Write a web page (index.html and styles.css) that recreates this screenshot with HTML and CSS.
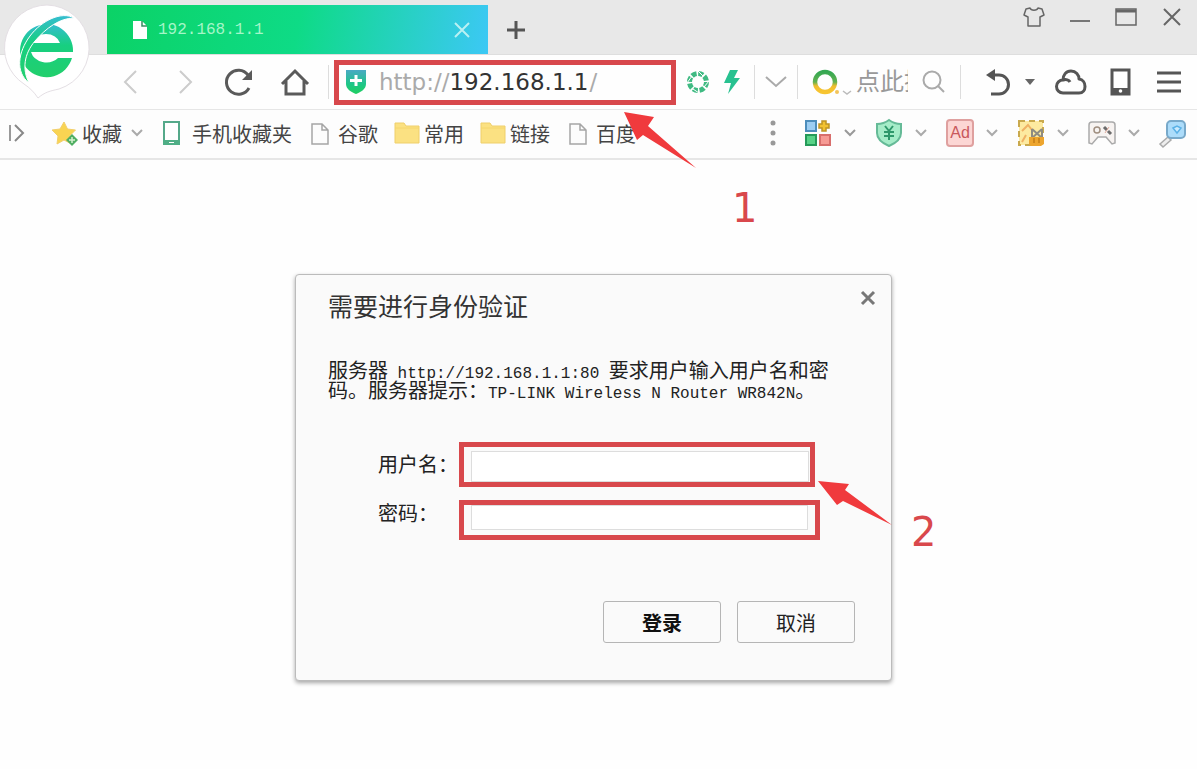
FILE: index.html
```html
<!DOCTYPE html>
<html lang="zh-CN">
<head>
  <meta charset="UTF-8" />
  <meta name="viewport" content="width=device-width, initial-scale=1.0"/>
  <title>192.168.1.1</title>
  <link rel="stylesheet" href="styles.css">
</head>
<body>
  <header class="browser">
    <div class="logo">
      <svg width="92" height="100" viewBox="0 0 92 100">
        <defs>
          <linearGradient id="eFill" x1="0" y1="0" x2="0" y2="1">
            <stop offset="0" stop-color="#35bdd0"/>
            <stop offset="0.4" stop-color="#17cf80"/>
            <stop offset="1" stop-color="#22cf6c"/>
          </linearGradient>
        </defs>
        <path d="M47 5A43 43 0 0 1 59 89c-9 2-14 3-21 9-4-6-8-10-14-14A43 43 0 0 1 47 5z" fill="#fff" stroke="#e4dfe4"/>
        <path d="M73 52H31a16 14 0 0 0 27 6h14A26.500 26.500 0 1 1 73 52zM32 43h28a14.500 12 0 0 0-28 0z" fill="url(#eFill)" fill-rule="evenodd"/>
        <path d="M74 18C62 11 42 20 30 36 18 52 15 72 29 83c-7-14-5-29 6-42s25-23 39-23z" fill="url(#eFill)" stroke="#fff"/>
      </svg>
    </div>

    <div class="tab-strip">
      <div class="tab">
        <svg width="16" height="20" viewBox="0 0 16 20"><path d="M1 1h9l5 5v13H1z" fill="#fff"/><path d="M10 1v5h5" fill="none" stroke="#3a8d62" stroke-width="1.500"/></svg>
        <span class="tab-title">192.168.1.1</span>
        <button class="tab-close" aria-label="关闭标签页">
          <svg width="16" height="16" viewBox="0 0 16 16"><path d="M1 1l14 14M15 1L1 15" stroke="#b9f1f3" stroke-width="2"/></svg>
        </button>
      </div>
      <button class="new-tab" aria-label="新标签页">
        <svg width="18" height="18" viewBox="0 0 18 18"><path d="M9 0v18M0 9h18" stroke="#555" stroke-width="3"/></svg>
      </button>
      <div class="window-buttons">
        <button aria-label="皮肤"><svg width="22" height="20" viewBox="0 0 22 20"><path d="M7 1c1 3 7 3 8 0l4 1 2 6-4 2v9H5v-9L1 8l2-6z" fill="none" stroke="#666" stroke-width="1.500" stroke-linejoin="round"/></svg></button>
        <button aria-label="最小化"><svg width="20" height="20" viewBox="0 0 20 20"><path d="M0 14h20" stroke="#777" stroke-width="2"/></svg></button>
        <button aria-label="最大化"><svg width="22" height="18" viewBox="0 0 22 18"><path d="M1 1h20v16H1z" fill="none" stroke="#666" stroke-width="1.500"/><path d="M1 3h20" stroke="#666" stroke-width="3"/></svg></button>
        <button aria-label="关闭"><svg width="18" height="18" viewBox="0 0 18 18"><path d="M1 1l16 16M17 1L1 17" stroke="#666" stroke-width="2"/></svg></button>
      </div>
    </div>

    <div class="toolbar">
      <nav class="nav-buttons">
        <button aria-label="后退"><svg width="28" height="28" viewBox="0 0 28 28"><path d="M20 3L9 14l11 11" fill="none" stroke="#ccc" stroke-width="2"/></svg></button>
        <button aria-label="前进"><svg width="28" height="28" viewBox="0 0 28 28"><path d="M9 3l11 11L9 25" fill="none" stroke="#ccc" stroke-width="2"/></svg></button>
        <button aria-label="刷新"><svg width="28" height="28" viewBox="0 0 28 28"><path d="M22 7A12 12 0 1 0 23 20" fill="none" stroke="#5a5a5a" stroke-width="3"/><path d="M26 2v10h-10z" fill="#5a5a5a"/></svg></button>
        <button aria-label="主页"><svg width="28" height="28" viewBox="0 0 28 28"><path d="M1 16L14 3l13 13M5 13v13h18V13" fill="none" stroke="#5a5a5a" stroke-width="3"/></svg></button>
      </nav>
      <span class="divider"></span>
      <div class="address mark">
        <svg width="22" height="26" viewBox="0 0 22 26">
          <defs><linearGradient id="shieldFill" x1="0" y1="0" x2="0" y2="1"><stop offset="0" stop-color="#4aa9c4"/><stop offset="0.600" stop-color="#1dc686"/><stop offset="1" stop-color="#20cf60"/></linearGradient></defs>
          <path d="M1 1h20v14c0 5-5 8-10 10C6 23 1 20 1 15z" fill="url(#shieldFill)"/><path d="M11 6v11M5 11.500h12" stroke="#fff" stroke-width="3"/>
        </svg>
        <label class="scheme" for="url">http://</label><input class="url" id="url" type="text" value="192.168.1.1"><span class="scheme">/</span>
        <svg class="arrow arrow-one" width="74" height="58" viewBox="0 0 74 58"><path d="M1 1l30 5-6 9 48 42-53-33-6 5z" fill="#f03a3d"/></svg>
        <span class="step step-one">1</span>
      </div>
      <div class="page-tools">
        <button aria-label="极速模式"><svg width="24" height="24" viewBox="0 0 24 24"><circle cx="12" cy="12" r="8.500" fill="none" stroke="#3fba82" stroke-width="5" stroke-dasharray="5 1.670"/><path d="M12 1l5 5M23 11l-5 6M13 23l-6-4M1 13l5-7" stroke="#fff"/></svg></button>
        <button aria-label="加速"><svg width="24" height="26" viewBox="0 0 24 26"><path d="M10 1h8l-4 8h6L8 25l3-11H4z" fill="#28c190"/></svg></button>
        <span class="divider"></span>
        <button aria-label="展开"><svg width="22" height="12" viewBox="0 0 22 12"><path d="M1 1l10 9L21 1" fill="none" stroke="#aaa" stroke-width="2"/></svg></button>
        <span class="divider"></span>
      </div>
      <div class="search">
        <svg width="28" height="28" viewBox="0 0 28 28">
          <defs><linearGradient id="ringFill" x1="0" y1="0" x2="0" y2="1"><stop offset="0" stop-color="#35a852"/><stop offset="0.500" stop-color="#63b150"/><stop offset="0.700" stop-color="#f0bd2e"/><stop offset="1" stop-color="#f7c531"/></linearGradient></defs>
          <circle cx="13" cy="14" r="10" fill="none" stroke="url(#ringFill)" stroke-width="4.500"/><circle cx="25" cy="24" r="2" fill="#f2c45c"/>
        </svg>
        <svg class="search-more" width="10" height="6" viewBox="0 0 10 6"><path d="M1 1l4 3 4-3" fill="none" stroke="#bbb" stroke-width="1.500"/></svg>
        <input class="search-input" type="text" aria-label="搜索" placeholder="点此搜索">
        <button aria-label="搜索"><svg width="24" height="24" viewBox="0 0 24 24"><circle cx="10" cy="10" r="8.500" fill="none" stroke="#aaa" stroke-width="2"/><path d="M16 16l6 6" stroke="#aaa" stroke-width="2"/></svg></button>
      </div>
      <span class="divider"></span>
      <div class="menu-buttons">
        <button class="undo" aria-label="恢复">
          <svg width="26" height="28" viewBox="0 0 26 28"><path d="M7 7h7a9.500 9.500 0 0 1 0 19H6" fill="none" stroke="#555" stroke-width="3"/><path d="M1 7l9-6v12z" fill="#555"/></svg>
          <svg width="10" height="6" viewBox="0 0 10 6"><path d="M0 0h10L5 6z" fill="#666"/></svg>
        </button>
        <button aria-label="云"><svg width="32" height="26" viewBox="0 0 32 26"><path d="M8 24a6.500 6.500 0 0 1 0-13c0-5 3-9 8-9s8 4 8 8c8 1 8 14 0 14zM8 11c3-1 6 0 7 2" fill="none" stroke="#555" stroke-width="3" stroke-linejoin="round"/></svg></button>
        <button aria-label="手机"><svg width="28" height="28" viewBox="0 0 28 28"><path d="M5 2h17v24H5z" fill="none" stroke="#555" stroke-width="3"/><path d="M5 20h17v6H5z" fill="#555"/><circle cx="13.500" cy="23" r="1.800" fill="#fff"/></svg></button>
        <button aria-label="菜单"><svg width="28" height="24" viewBox="0 0 28 24"><path d="M2 3h24M2 12h24M2 21h24" stroke="#555" stroke-width="3"/></svg></button>
      </div>
    </div>

    <div class="bookmarks">
      <button class="sidebar-toggle" aria-label="侧边栏"><svg width="18" height="18" viewBox="0 0 18 18"><path d="M2 1v16" stroke="#999" stroke-width="2"/><path d="M7 1l8 8-8 8" fill="none" stroke="#888" stroke-width="2"/></svg></button>
      <a class="bookmark" href="#">
        <svg width="24" height="24" viewBox="0 0 24 24"><path d="M12 1l3.500 7 8 1-6 6 2 8-7.500-4-7 4 1-8-6-6 8-1z" fill="#f9d452" stroke="#f2cf6b"/><path d="M20 13l6 6-6 6-6-6z" fill="#4fae62"/><path d="M20 16v6M17 19h6" stroke="#d5f0d0" stroke-width="1.500"/></svg>
        <span>收藏</span>
        <svg class="bookmark-more" width="12" height="8" viewBox="0 0 12 8"><path d="M1 1l5 5 5-5" fill="none" stroke="#aaa" stroke-width="2"/></svg>
      </a>
      <a class="bookmark" href="#">
        <svg width="24" height="24" viewBox="0 0 24 24"><path d="M2 1h15v22H2z" fill="#fff" stroke="#55a98a" stroke-width="2"/><path d="M1 19h17v5H1z" fill="#4fae86"/><path d="M7 21.500h5" stroke="#fff"/></svg>
        <span>手机收藏夹</span>
      </a>
      <a class="bookmark" href="#">
        <svg width="24" height="24" viewBox="0 0 24 24"><path d="M4 3h10l6 6v14H4zM14 3v6h6" fill="#fcfcfc" stroke="#a5a5a5" stroke-width="1.500"/></svg>
        <span>谷歌</span>
      </a>
      <a class="bookmark" href="#">
        <svg width="24" height="24" viewBox="0 0 24 24"><path d="M1 2h9l2 3h13v17H1z" fill="#fbe182" stroke="#efcf6a"/><path d="M1 7h24" stroke="#f5d66c"/></svg>
        <span>常用</span>
      </a>
      <a class="bookmark" href="#">
        <svg width="24" height="24" viewBox="0 0 24 24"><path d="M1 2h9l2 3h13v17H1z" fill="#fbe182" stroke="#efcf6a"/><path d="M1 7h24" stroke="#f5d66c"/></svg>
        <span>链接</span>
      </a>
      <a class="bookmark" href="#">
        <svg width="24" height="24" viewBox="0 0 24 24"><path d="M4 3h10l6 6v14H4zM14 3v6h6" fill="#fcfcfc" stroke="#a5a5a5" stroke-width="1.500"/></svg>
        <span>百度</span>
      </a>

      <div class="extensions">
        <svg width="6" height="26" viewBox="0 0 6 26"><circle cx="3" cy="3" r="2.500" fill="#999"/><circle cx="3" cy="13" r="2.500" fill="#999"/><circle cx="3" cy="23" r="2.500" fill="#999"/></svg>
        <button class="extension" aria-label="应用">
          <svg width="28" height="28" viewBox="0 0 28 28"><path d="M2 2h10v10H2z" fill="#9ccdf2" stroke="#4d8dbb" stroke-width="2"/><path d="M18 2h4v3h3v4h-3v3h-4V9h-3V5h3z" fill="#f2c230" stroke="#bd9425" stroke-width="1.500"/><path d="M2 16h10v10H2z" fill="#58d287" stroke="#259a59" stroke-width="2"/><path d="M16 16h10v10H16z" fill="#f69a94" stroke="#d86e6c" stroke-width="2"/></svg>
          <svg width="12" height="8" viewBox="0 0 12 8"><path d="M1 1l5 5 5-5" fill="none" stroke="#999" stroke-width="2"/></svg>
        </button>
        <button class="extension" aria-label="网购保镖">
          <svg width="28" height="28" viewBox="0 0 28 28"><path d="M14 1c4 3 8 4 12 4v9c0 6-5 10-12 13C7 24 2 20 2 14V5c4 0 8-1 12-4z" fill="#a5ecc8" stroke="#65ba97" stroke-width="2"/><path d="M10 7l4 5 4-5M14 12v9M9 13h10M9 17h10" fill="none" stroke="#2e986b" stroke-width="2"/></svg>
          <svg width="12" height="8" viewBox="0 0 12 8"><path d="M1 1l5 5 5-5" fill="none" stroke="#aaa" stroke-width="2"/></svg>
        </button>
        <button class="extension" aria-label="广告拦截">
          <span class="ad">Ad</span>
          <svg width="12" height="8" viewBox="0 0 12 8"><path d="M1 1l5 5 5-5" fill="none" stroke="#aaa" stroke-width="2"/></svg>
        </button>
        <button class="extension" aria-label="截图">
          <svg width="28" height="28" viewBox="0 0 28 28"><path d="M2 2h24v24H2z" fill="#fdeaa0" stroke="#c9a94e" stroke-width="2" stroke-dasharray="6 4"/><path d="M5 12l6-6 4 5M5 23l4-7" fill="none" stroke="#f0b264" stroke-width="2"/><path d="M15 10v8M25 10v8M15 10l10 9M25 10l-10 9" stroke="#8f8c81" stroke-width="2"/><path d="M12 18h15v7l-3 2H14l-2-2z" fill="#eda52e"/><path d="M17 19v5M22 19v5" stroke="#c57d16" stroke-width="1.500"/></svg>
          <svg width="12" height="8" viewBox="0 0 12 8"><path d="M1 1l5 5 5-5" fill="none" stroke="#aaa" stroke-width="2"/></svg>
        </button>
        <button class="extension" aria-label="游戏">
          <svg width="28" height="28" viewBox="0 0 28 28"><path d="M4 3h20c2 0 3 1 3 3v18l-3 1-6-7h-8l-6 7-3-1V6c0-2 1-3 3-3z" fill="#f7f3f1" stroke="#aaa" stroke-width="1.500"/><circle cx="9" cy="11" r="3" fill="none" stroke="#a08f80" stroke-width="1.500"/><path d="M16 8l3 3M20 12l3 3" stroke="#6c6c6c" stroke-width="3"/><path d="M21 8l-4 6" stroke="#e0a99a"/></svg>
          <svg width="12" height="8" viewBox="0 0 12 8"><path d="M1 1l5 5 5-5" fill="none" stroke="#aaa" stroke-width="2"/></svg>
        </button>
        <button class="extension" aria-label="查找">
          <svg width="28" height="28" viewBox="0 0 28 28"><path d="M9 18l3 3-8 7-3-3z" fill="#eee" stroke="#aaa" stroke-width="1.500"/><rect x="8" y="2" width="18" height="17" rx="4" fill="#acdcfa" stroke="#78a9ca" stroke-width="2"/><path d="M14 9l4-2 4 2-4 5z" fill="#cbeafd" stroke="#5bb1e6" stroke-width="1.500"/></svg>
        </button>
      </div>
    </div>
  </header>

  <main class="page">
    <section class="dialog" role="dialog" aria-labelledby="dialogTitle">
      <div class="dialog-head">
        <h1 id="dialogTitle">需要进行身份验证</h1>
        <button class="dialog-close" aria-label="关闭"><svg width="14" height="14" viewBox="0 0 14 14"><path d="M1 1l12 12M13 1L1 13" stroke="#777" stroke-width="3"/></svg></button>
      </div>
      <p class="message">服务器<span class="latin"> http://192.168.1.1:80 </span>要求用户输入用户名和密码。服务器提示：<span class="latin">TP-LINK Wireless N Router WR842N</span>。</p>
      <form>
        <div class="field field-user">
          <label for="username">用户名：</label>
          <div class="mark">
            <input type="text" id="username">
            <svg class="arrow arrow-two" width="76" height="46" viewBox="0 0 76 46"><path d="M1 1l31 3-4 6 47 35-49-24-6 4z" fill="#f03a3d"/></svg>
            <span class="step step-two">2</span>
          </div>
        </div>
        <div class="field field-password">
          <label for="password">密码：</label>
          <div class="mark"><input type="password" id="password"></div>
        </div>
        <div class="actions">
          <button class="login" type="button">登录</button>
          <button type="button">取消</button>
        </div>
      </form>
    </section>
  </main>
</body>
</html>
```
FILE: styles.css
```css
* {
  box-sizing: border-box;
}
body {
  margin: 0;
  background: #fefefe;
  color: #333;
  font-family: "Liberation Sans", "Noto Sans CJK SC", sans-serif;
  font-size: 20px;
}
button {
  display: flex;
  align-items: center;
  justify-content: center;
  padding: 0;
  border: none;
  background: none;
  font: inherit;
  color: inherit;
  cursor: pointer;
}
input {
  font: inherit;
  outline: none;
}
svg {
  flex: none;
  overflow: visible;
}

/* browser chrome */
.browser {
  position: relative;
}
.logo {
  position: absolute;
  left: 0;
  top: 0;
  z-index: 1;
}
.tab-strip {
  display: flex;
  height: 55px;
  padding: 5px 11px 0 107px;
  background: #e8e8e8;
  border-bottom: 1px solid #dedede;
}
.tab {
  display: flex;
  align-items: center;
  flex: 0 1 381px;
  padding: 0 18px 0 25px;
  background: linear-gradient(100deg, #0bd266 0%, #0edb86 50%, #3cc8f5 100%);
}
.tab-title {
  flex: 1;
  margin-left: 10px;
  font-family: "Liberation Mono", monospace;
  font-size: 16px;
  color: #a5f5c8;
}
.new-tab {
  width: 56px;
}
.window-buttons {
  display: flex;
  gap: 18px;
  height: 24px;
  margin-left: auto;
}
.window-buttons button {
  width: 28px;
}

.toolbar {
  display: flex;
  align-items: center;
  height: 55px;
  padding: 0 14px 0 114px;
  background: #fefefe;
  border-bottom: 1px solid #e6e6e6;
}
.nav-buttons {
  display: flex;
  gap: 23px;
}
.nav-buttons button {
  width: 32px;
}
.divider {
  width: 1px;
  height: 34px;
  background: #ddd;
}
.nav-buttons + .divider {
  margin: 0 5px 0 17px;
}
.mark {
  position: relative;
  display: flex;
  border: 5px solid #d8484c;
}
.address {
  flex: 1;
  align-items: center;
  min-width: 0;
  height: 45px;
  padding-left: 6px;
  font-family: "DejaVu Sans", sans-serif;
  font-size: 23px;
}
.address > svg:first-child {
  margin-right: 12px;
}
.scheme {
  color: #aaa;
}
.url {
  width: 140px;
  padding: 0;
  border: none;
  background: none;
  color: #333;
}
.arrow {
  position: absolute;
  z-index: 2;
}
.arrow-one {
  left: 284px;
  top: 46px;
}
.step {
  position: absolute;
  font-family: "DejaVu Sans", sans-serif;
  font-size: 40px;
  line-height: 40px;
  color: #d9484c;
}
.step-one {
  left: 393px;
  top: 123px;
}
.page-tools {
  display: flex;
  align-items: center;
  gap: 10px;
  margin-left: 10px;
}
.search {
  display: flex;
  align-items: center;
  margin: 0 14px;
}
.search-more {
  margin: 22px 4px 0 2px;
}
.search-input {
  width: 52px;
  padding: 0;
  border: none;
  background: none;
  font-size: 24px;
}
.search-input::placeholder {
  color: #999;
}
.search button {
  margin-left: 14px;
}
.menu-buttons {
  display: flex;
  align-items: center;
  gap: 20px;
  margin-left: 24px;
}
.undo {
  gap: 14px;
}

.bookmarks {
  display: flex;
  align-items: center;
  gap: 16px;
  height: 50px;
  padding: 0 10px 2px 8px;
  background: #fdfdfd;
  border-bottom: 2px solid #e6e6e6;
}
.sidebar-toggle {
  margin-right: 10px;
}
.bookmark {
  display: flex;
  align-items: center;
  gap: 6px;
  white-space: nowrap;
  color: #444;
  text-decoration: none;
}
.bookmark-more {
  margin: 0 3px;
}
.extensions {
  display: flex;
  align-items: center;
  gap: 19px;
  margin-left: auto;
}
.extensions > svg {
  margin-right: 9px;
}
.extension {
  gap: 12px;
}
.ad {
  width: 28px;
  border: 2px solid #dfa09f;
  border-radius: 4px;
  background: #fcd6d4;
  font-size: 16px;
  line-height: 24px;
  color: #c9585c;
}

/* login dialog */
.page {
  padding: 114px 10px 20px 0;
}
.dialog {
  max-width: 597px;
  margin: 0 auto;
  padding: 16px 36px 37px 32px;
  border: 1px solid #bbb;
  border-radius: 4px;
  background: #fafafa;
  box-shadow: 0 2px 4px rgba(0, 0, 0, 0.35);
}
.dialog-head {
  display: flex;
  justify-content: space-between;
  align-items: flex-start;
  margin-right: -20px;
}
.dialog h1 {
  margin: 0;
  font-size: 25px;
  font-weight: normal;
  line-height: 32px;
}
.dialog-close {
  width: 14px;
  height: 14px;
}
.message {
  max-width: 510px;
  margin: 38px 0 41px;
  line-height: 20px;
  color: #222;
}
.latin {
  font-family: "Liberation Mono", monospace;
  font-size: 16px;
  line-height: 12px;
}
.field {
  display: flex;
  margin-left: 50px;
  line-height: 28px;
  color: #222;
}
.field label {
  flex: 0 0 81px;
  white-space: nowrap;
}
.field input {
  flex: 1;
  min-width: 0;
  border: 1px solid #ddd;
  background: #fff;
}
.field-user {
  align-items: center;
  margin-bottom: 13px;
}
.field-user .mark {
  flex: 0 1 356px;
  height: 45px;
  padding: 4px 1px 0 7px;
}
.field-password .mark {
  flex: 0 1 361px;
  height: 40px;
  padding: 0 7px 5px;
}
.arrow-two {
  left: 353px;
  top: 33px;
}
.step-two {
  left: 447px;
  top: 65px;
}
.actions {
  display: flex;
  justify-content: flex-end;
  gap: 16px;
  margin-top: 61px;
}
.actions button {
  width: 118px;
  height: 42px;
  border: 1px solid #b5b5b5;
  border-radius: 3px;
  color: #222;
}
.actions .login {
  font-weight: bold;
  color: #111;
}
```
